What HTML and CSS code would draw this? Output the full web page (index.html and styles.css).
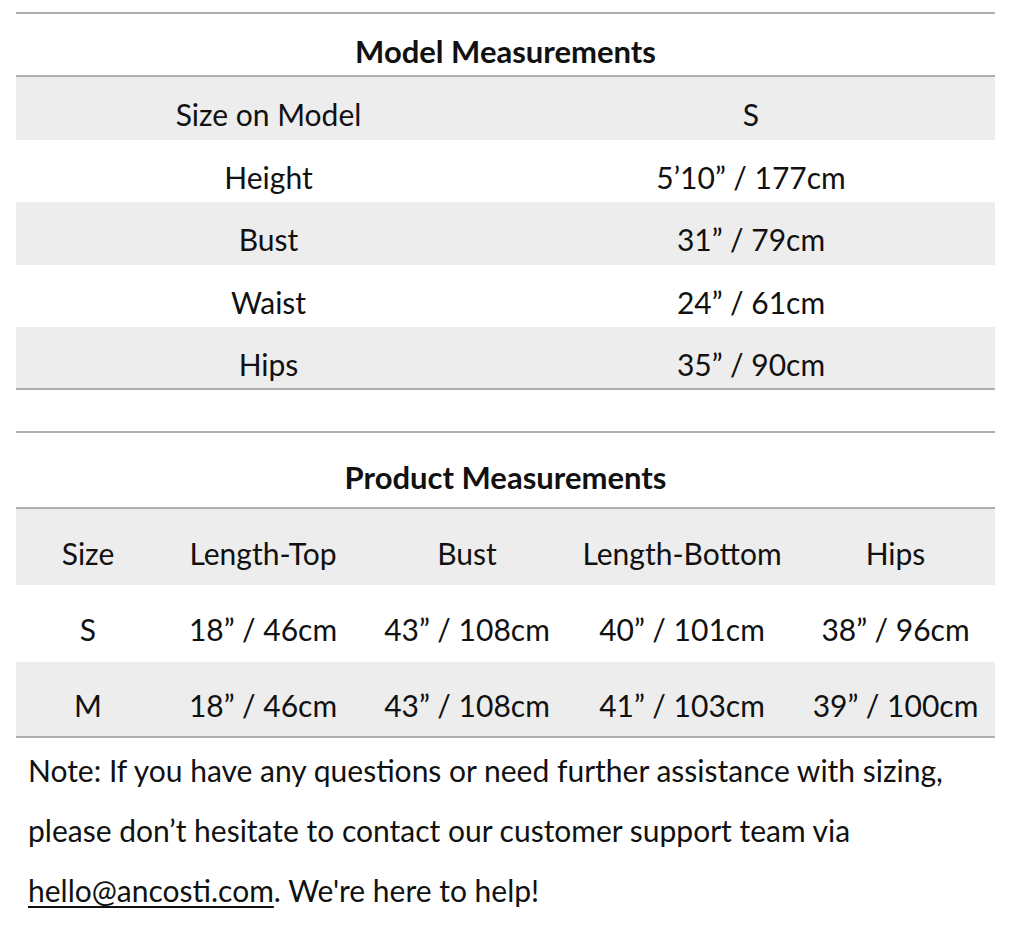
FILE: index.html
```html
<!DOCTYPE html>
<html>
<head>
<meta charset="utf-8">
<link rel="stylesheet" href="styles.css">
</head>
<body>
<div class="page">
  <section class="table model">
    <div class="title">Model Measurements</div>
    <div class="row shade"><div>Size on Model</div><div class="val">S</div></div>
    <div class="row"><div>Height</div><div class="val">5’10” / 177cm</div></div>
    <div class="row shade"><div>Bust</div><div class="val">31” / 79cm</div></div>
    <div class="row"><div>Waist</div><div class="val">24” / 61cm</div></div>
    <div class="row shade last"><div>Hips</div><div class="val">35” / 90cm</div></div>
  </section>

  <section class="table product">
    <div class="title">Product Measurements</div>
    <div class="row shade"><div>Size</div><div>Length-Top</div><div>Bust</div><div>Length-Bottom</div><div>Hips</div></div>
    <div class="row"><div>S</div><div>18” / 46cm</div><div>43” / 108cm</div><div>40” / 101cm</div><div>38” / 96cm</div></div>
    <div class="row shade last"><div>M</div><div>18” / 46cm</div><div>43” / 108cm</div><div>41” / 103cm</div><div>39” / 100cm</div></div>
  </section>

  <p class="note">Note: If you have any questions or need further assistance with sizing, please don’t hesitate to contact our customer support team via <a href="#">hello@ancosti.com</a>. We're here to help!</p>
</div>
</body>
</html>
```
FILE: styles.css
```css
html, body {
  margin: 0;
  padding: 0;
  background: #ffffff;
}
.page {
  padding: 12px 17px 0 16px;
  font-family: Lato, "Liberation Sans", sans-serif;
  font-size: 30px;
  color: #111;
}
.table {
  border-top: 2px solid #aeaeae;
}
.title {
  font-weight: 700;
  text-align: center;
  border-bottom: 2px solid #aeaeae;
  font-size: 31px;
}
.model .title {
  height: 61px;
  line-height: 75px;
}
.product .title {
  height: 74px;
  line-height: 88px;
}
.row {
  display: grid;
  text-align: center;
  align-items: center;
  box-sizing: border-box;
  padding-top: 12px;
  line-height: 1;
}
.model .row {
  grid-template-columns: 505px 1fr;
  height: 62.6px;
}
.model .val {
  padding-right: 14px;
}
.product .row {
  grid-template-columns: 144px 206px 202px 228px 1fr;
  height: 76.3px;
}
.shade {
  background: #ededed;
}
.last {
  border-bottom: 2px solid #aeaeae;
}
.model {
  margin-bottom: 41px;
}
.note {
  margin: 0;
  padding: 2px 12px 0 12px;
  line-height: 60px;
}
.note a {
  color: #111;
  text-decoration: underline;
  text-decoration-thickness: 2px;
  text-underline-offset: 4px;
}
```
